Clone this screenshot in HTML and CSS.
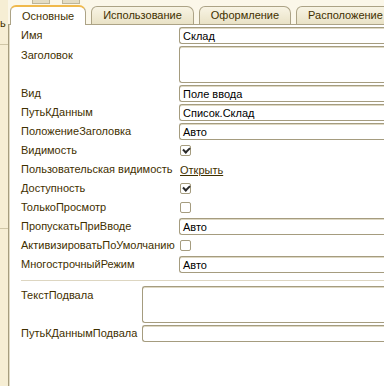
FILE: index.html
```html
<!DOCTYPE html>
<html lang="ru">
<head>
    <meta charset="UTF-8">
    <title>Свойства поля</title>
    <link rel="stylesheet" href="styles.css">
</head>
<body>
    <div class="window">
        <div class="side">
            <span class="side-letter">ь</span>
            <div class="side-line first"></div>
            <div class="side-line second"></div>
        </div>

        <div class="main">
            <div class="toolbar-tail">
                <span class="btn-tail"></span>
                <span class="btn-tail"></span>
            </div>

            <div class="tabs">
                <div class="tab active">Основные</div>
                <div class="tab">Использование</div>
                <div class="tab">Оформление</div>
                <div class="tab">Расположение</div>
            </div>

            <div class="content">
                <div class="form">
                    <div class="label">Имя</div>
                    <div class="field">Склад</div>

                    <div class="label top">Заголовок</div>
                    <div class="field area"></div>

                    <div class="label">Вид</div>
                    <div class="field">Поле ввода</div>

                    <div class="label">ПутьКДанным</div>
                    <div class="field">Список.Склад</div>

                    <div class="label">ПоложениеЗаголовка</div>
                    <div class="field">Авто</div>

                    <div class="label">Видимость</div>
                    <div class="check-cell"><span class="check on"></span></div>

                    <div class="label">Пользовательская видимость</div>
                    <div class="check-cell"><a class="link" href="#">Открыть</a></div>

                    <div class="label">Доступность</div>
                    <div class="check-cell"><span class="check on"></span></div>

                    <div class="label">ТолькоПросмотр</div>
                    <div class="check-cell"><span class="check"></span></div>

                    <div class="label">ПропускатьПриВводе</div>
                    <div class="field">Авто</div>

                    <div class="label">АктивизироватьПоУмолчанию</div>
                    <div class="check-cell"><span class="check"></span></div>

                    <div class="label">МногострочныйРежим</div>
                    <div class="field">Авто</div>
                </div>

                <div class="separator"></div>

                <div class="form footer">
                    <div class="label top">ТекстПодвала</div>
                    <div class="field area"></div>

                    <div class="label">ПутьКДаннымПодвала</div>
                    <div class="field"></div>
                </div>
            </div>
        </div>
    </div>
</body>
</html>
```

FILE: styles.css
```css
body {
    margin: 0;
    width: 384px;
    height: 386px;
    overflow: hidden;
    background-color: #f7f0da;
    font-family: "Liberation Sans", Arial, sans-serif;
    font-size: 11px;
    color: #3f3000;
}
.window {
    display: flex;
    height: 386px;
}
.side {
    position: relative;
    width: 8px;
    flex-shrink: 0;
    background-color: #f6eed4;
}
.side-letter {
    position: absolute;
    left: 0;
    top: 17px;
    font-size: 11px;
    color: #3f3000;
}
.side-line {
    position: absolute;
    left: 0;
    width: 8px;
    height: 1px;
    background-color: #cfc6a6;
}
.side-line.first {
    top: 44px;
}
.side-line.second {
    top: 228px;
}
.main {
    width: 470px;
    flex-shrink: 0;
    background-color: #fbf7e9;
    position: relative;
}
.toolbar-tail {
    position: absolute;
    top: 0;
    left: 24px;
    display: flex;
    gap: 12px;
}
.btn-tail {
    width: 16px;
    height: 3px;
    background-color: #e3dcc4;
    border: 1px solid #bdb598;
    border-top: none;
}
.tabs {
    height: 24px;
    display: flex;
    align-items: flex-end;
    gap: 5px;
    padding-left: 2px;
    box-sizing: border-box;
}
.tab {
    height: 17px;
    line-height: 17px;
    padding: 0 11px;
    border: 1px solid #aca386;
    border-bottom: none;
    border-radius: 6px 7px 0 0;
    background: linear-gradient(#f8f4e4, #e9e2c6);
    color: #3f3000;
    font-size: 11px;
}
.tab.active {
    height: 18px;
    line-height: 18px;
    background: #fff;
    border-top: 2px solid #f0b94c;
    margin-bottom: -1px;
    position: relative;
    z-index: 1;
}
.content {
    background-color: #fff;
    border-top: 1px solid #aca386;
    border-left: 1px solid #a69d7e;
    box-shadow: inset 1px 0 0 #e2dcc6;
    height: 362px;
    box-sizing: border-box;
    padding: 2px 0 0 12px;
}
.form {
    display: grid;
    grid-template-columns: 158px 1fr;
    row-gap: 2px;
    align-items: center;
}
.form.footer {
    grid-template-columns: 121px 1fr;
}
.label {
    white-space: nowrap;
    line-height: 17px;
}
.label.top {
    align-self: start;
    padding-top: 1px;
}
.field {
    height: 17px;
    line-height: 16px;
    box-sizing: border-box;
    border: 1px solid #a59c7f;
    border-right: none;
    border-radius: 3px 0 0 3px;
    box-shadow: inset 0 1px 0 #ded8c3;
    padding-left: 3px;
    color: #000;
}
.field.area {
    height: 37px;
}
.check-cell {
    height: 17px;
    display: flex;
    align-items: center;
    padding-left: 1px;
}
.check {
    width: 11px;
    height: 11px;
    box-sizing: border-box;
    border: 1px solid #a59c7f;
    border-radius: 2px;
    background-color: #fff;
    position: relative;
}
.check.on::after {
    content: "";
    position: absolute;
    left: 2px;
    top: 1px;
    width: 5px;
    height: 3px;
    border-left: 2px solid #2a2a2a;
    border-bottom: 2px solid #2a2a2a;
    transform: rotate(-45deg);
}
.link {
    color: #3f3000;
    text-decoration: underline;
}
.separator {
    height: 1px;
    background-color: #ddd6c1;
    margin: 7px 0 5px 0;
}
```
